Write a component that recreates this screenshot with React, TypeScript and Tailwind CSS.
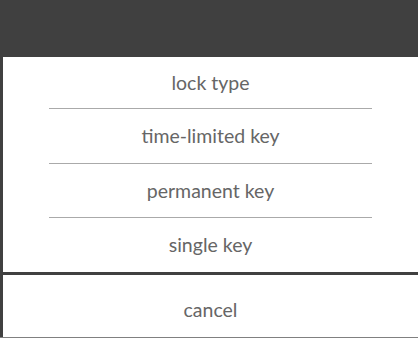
import React from "react";

export default function App() {
  const items = [
    { label: "lock type", h: "h-[51px]" },
    { label: "time-limited key", h: "h-[54px]" },
    { label: "permanent key", h: "h-[53px]" },
    { label: "single key", h: "h-[54px]" },
  ];
  return (
    <div
      className="w-[418px] h-[338px] bg-white overflow-hidden flex flex-col"
      style={{ fontFamily: "Lato, 'Noto Sans', sans-serif" }}
    >
      <div className="h-[57px] bg-[#404040] shrink-0" />
      <div className="flex flex-col border-l-[3px] border-[#404040]">
        {items.map((it, i) => (
          <div key={it.label} className="flex flex-col items-center">
            <div
              className={`${it.h} w-full flex items-center justify-center text-[19.5px] text-[#666666]`}
            >
              {it.label}
            </div>
            {i < items.length - 1 && (
              <div className="h-px w-[323px] bg-[#aaaaaa]" />
            )}
          </div>
        ))}
      </div>
      <div className="h-[3px] bg-[#404040] shrink-0" />
      <div className="h-[62px] border-l-[3px] border-[#404040] flex items-center justify-center pt-[8px] text-[19.5px] text-[#666666]">
        cancel
      </div>
      <div className="h-px bg-[#808080] shrink-0" />
    </div>
  );
}
